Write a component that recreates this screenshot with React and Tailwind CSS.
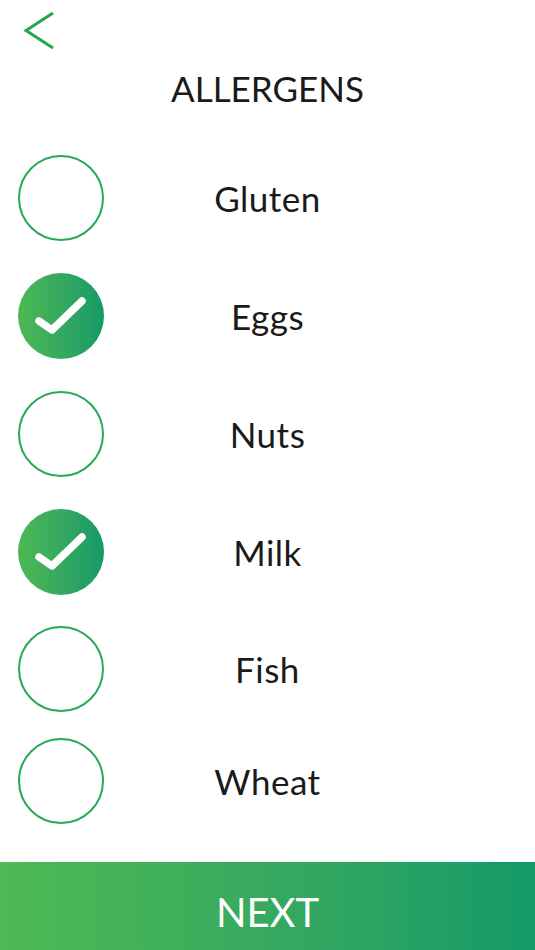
import React, { useState } from 'react';

const items = [
  { name: 'Gluten', gap: 'mt-0' },
  { name: 'Eggs', gap: 'mt-[32px]' },
  { name: 'Nuts', gap: 'mt-[32px]' },
  { name: 'Milk', gap: 'mt-[32px]' },
  { name: 'Fish', gap: 'mt-[31px]' },
  { name: 'Wheat', gap: 'mt-[26px]' },
];

const Check = ({ checked }) =>
  checked ? (
    <div className="w-[86px] h-[86px] rounded-full bg-linear-to-r from-[#4db853] to-[#139a68]">
      <svg width="86" height="86" viewBox="0 0 86 86">
        <polyline
          points="21,48 34,57 64,28"
          fill="none"
          stroke="white"
          strokeWidth="7.5"
          strokeLinecap="round"
          strokeLinejoin="round"
        />
      </svg>
    </div>
  ) : (
    <div className="w-[86px] h-[86px] rounded-full border-[2.5px] border-[#25aa55]" />
  );

const App = () => {
  const [selected, setSelected] = useState({ Eggs: true, Milk: true });

  const toggle = (name) => setSelected({ ...selected, [name]: !selected[name] });

  return (
    <div
      className="h-[950px] w-full bg-white flex flex-col"
      style={{ fontFamily: 'Lato, "Noto Sans", sans-serif' }}
    >
      <div className="pt-[12px] pl-[24px]">
        <svg width="30" height="37" viewBox="0 0 30 37">
          <polyline points="29,1 2,18.5 29,36" fill="none" stroke="#22a94f" strokeWidth="3" />
        </svg>
      </div>

      <h2 className="mt-[22px] text-center text-[35px] leading-none text-[#1a1a1a]">ALLERGENS</h2>

      <div className="mt-[49px] flex flex-col">
        {items.map((item) => (
          <div
            key={item.name}
            className={`${item.gap} grid grid-cols-[1fr_auto_1fr] items-center cursor-pointer`}
            onClick={() => toggle(item.name)}
          >
            <div className="pl-[18px]">
              <Check checked={!!selected[item.name]} />
            </div>
            <span className="text-[35px] leading-none text-[#1a1a1a] tracking-[0.5px]">{item.name}</span>
            <div />
          </div>
        ))}
      </div>

      <button className="mt-auto h-[88px] w-full pt-[12px] bg-linear-to-r from-[#4fb953] to-[#139a68] text-white text-[40px] leading-none">
        NEXT
      </button>
    </div>
  );
};

export default App;
